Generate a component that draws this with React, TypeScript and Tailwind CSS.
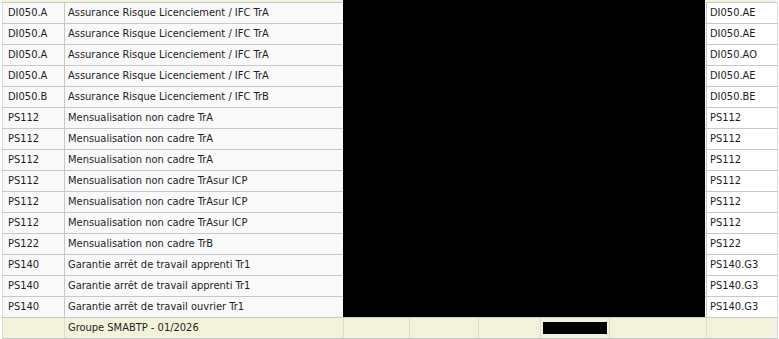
const rows = [
  ["DI050.A", "Assurance Risque Licenciement / IFC TrA", "DI050.AE"],
  ["DI050.A", "Assurance Risque Licenciement / IFC TrA", "DI050.AE"],
  ["DI050.A", "Assurance Risque Licenciement / IFC TrA", "DI050.AO"],
  ["DI050.A", "Assurance Risque Licenciement / IFC TrA", "DI050.AE"],
  ["DI050.B", "Assurance Risque Licenciement / IFC TrB", "DI050.BE"],
  ["PS112", "Mensualisation non cadre TrA", "PS112"],
  ["PS112", "Mensualisation non cadre TrA", "PS112"],
  ["PS112", "Mensualisation non cadre TrA", "PS112"],
  ["PS112", "Mensualisation non cadre TrAsur ICP", "PS112"],
  ["PS112", "Mensualisation non cadre TrAsur ICP", "PS112"],
  ["PS112", "Mensualisation non cadre TrAsur ICP", "PS112"],
  ["PS122", "Mensualisation non cadre TrB", "PS122"],
  ["PS140", "Garantie arrêt de travail apprenti Tr1", "PS140.G3"],
  ["PS140", "Garantie arrêt de travail apprenti Tr1", "PS140.G3"],
  ["PS140", "Garantie arrêt de travail ouvrier Tr1", "PS140.G3"],
];

export default function App() {
  return (
    <div
      className="w-[779px] h-[339px] bg-white overflow-hidden relative text-[11px] text-[#1e1e1e]"
      style={{ fontFamily: "Tahoma, 'DejaVu Sans Condensed', 'Liberation Sans', sans-serif" }}
    >
      <div className="h-[2px] ml-[2px] w-[774px] bg-[#f3f3dc]" />
      <table className="ml-[2px] border-collapse table-fixed w-[775px]">
        <colgroup>
          <col className="w-[62px]" />
          <col className="w-[279px]" />
          <col className="w-[66px]" />
          <col className="w-[69px]" />
          <col className="w-[62px]" />
          <col className="w-[69px]" />
          <col className="w-[97px]" />
          <col className="w-[71px]" />
        </colgroup>
        <tbody>
          {rows.map((r, i) => (
            <tr key={i} className="h-[21px] bg-[#f9f9f9]">
              <td className="border border-[#c8c8c8] border-l-[#dcdcdc] px-[5px] whitespace-nowrap">{r[0]}</td>
              <td className="border border-[#c8c8c8] border-x-[#dcdcdc] px-[3px] whitespace-nowrap">{r[1]}</td>
              <td className="border border-[#c8c8c8]" />
              <td className="border border-[#c8c8c8]" />
              <td className="border border-[#c8c8c8]" />
              <td className="border border-[#c8c8c8]" />
              <td className="border border-[#c8c8c8]" />
              <td className="border border-[#c8c8c8] border-x-[#dcdcdc] px-[3px] whitespace-nowrap bg-white">{r[2]}</td>
            </tr>
          ))}
          <tr className="h-[21px] bg-[#f3f3dc]">
            <td className="border border-[#c8c8c8] border-x-[#dcdcdc]" />
            <td className="border border-[#c8c8c8] border-x-[#dcdcdc] px-[3px] whitespace-nowrap">Groupe SMABTP - 01/2026</td>
            <td className="border border-[#c8c8c8] border-x-[#dcdcdc]" />
            <td className="border border-[#c8c8c8] border-x-[#dcdcdc]" />
            <td className="border border-[#c8c8c8] border-x-[#dcdcdc]" />
            <td className="border border-[#c8c8c8] border-x-[#dcdcdc] px-[2px]">
              <div className="h-[12px] bg-black" />
            </td>
            <td className="border border-[#c8c8c8] border-x-[#dcdcdc]" />
            <td className="border border-[#c8c8c8] border-x-[#dcdcdc]" />
          </tr>
        </tbody>
      </table>
      {/* redacted block */}
      <div className="absolute left-[343px] top-0 w-[362px] h-[317px] bg-black" />
    </div>
  );
}
